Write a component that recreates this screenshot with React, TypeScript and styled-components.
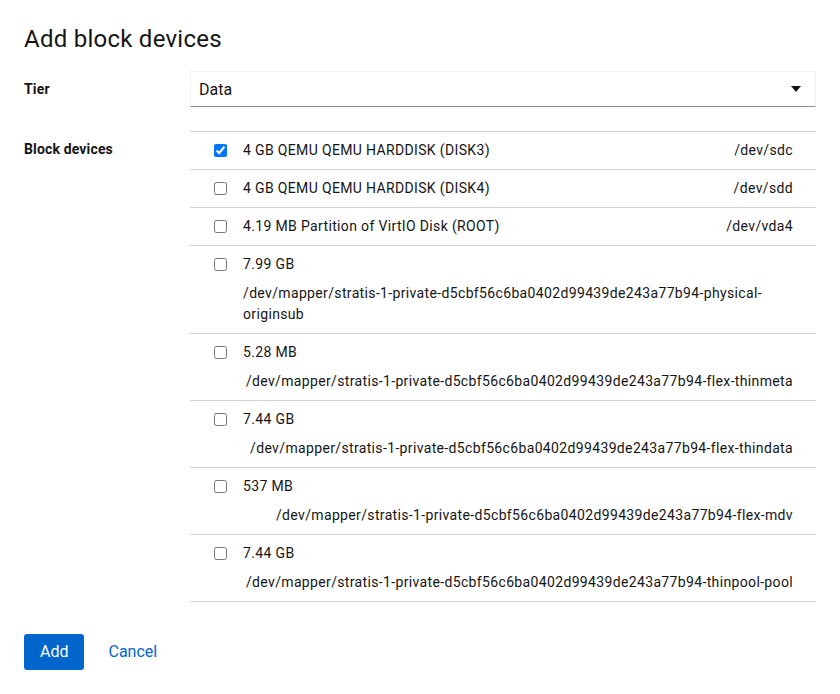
import styled, { createGlobalStyle } from "styled-components";

const GlobalStyle = createGlobalStyle`
  html, body {
    margin: 0;
    padding: 0;
    background: #ffffff;
  }
  body {
    font-family: Roboto, "Liberation Sans", sans-serif;
    color: #151515;
    font-size: 14px;
  }
`;

type Device = {
  name: string;
  path: string;
  checked?: boolean;
};

const devices: Device[] = [
  { name: "4 GB QEMU QEMU HARDDISK (DISK3)", path: "/dev/sdc", checked: true },
  { name: "4 GB QEMU QEMU HARDDISK (DISK4)", path: "/dev/sdd" },
  { name: "4.19 MB Partition of VirtIO Disk (ROOT)", path: "/dev/vda4" },
  { name: "7.99 GB", path: "/dev/mapper/stratis-1-private-d5cbf56c6ba0402d99439de243a77b94-physical-originsub" },
  { name: "5.28 MB", path: "/dev/mapper/stratis-1-private-d5cbf56c6ba0402d99439de243a77b94-flex-thinmeta" },
  { name: "7.44 GB", path: "/dev/mapper/stratis-1-private-d5cbf56c6ba0402d99439de243a77b94-flex-thindata" },
  { name: "537 MB", path: "/dev/mapper/stratis-1-private-d5cbf56c6ba0402d99439de243a77b94-flex-mdv" },
  { name: "7.44 GB", path: "/dev/mapper/stratis-1-private-d5cbf56c6ba0402d99439de243a77b94-thinpool-pool" },
];

export default function App() {
  return (
    <Page>
      <GlobalStyle />
      <Title>Add block devices</Title>
      <Form>
        <Label>Tier</Label>
        <Select>
          <span>Data</span>
          <svg width="10" height="6" viewBox="0 0 10 6">
            <path d="M0 0 H10 L5 6 Z" fill="#151515" />
          </svg>
        </Select>

        <Label>Block devices</Label>
        <List>
          {devices.map((d, i) => (
            <Row key={i}>
              <CheckCell>
                <input type="checkbox" defaultChecked={d.checked} />
              </CheckCell>
              <Cells>
                <Name>{d.name}</Name>
                <DevPath>{d.path}</DevPath>
              </Cells>
            </Row>
          ))}
        </List>
      </Form>
      <Footer>
        <PrimaryButton>Add</PrimaryButton>
        <LinkButton>Cancel</LinkButton>
      </Footer>
    </Page>
  );
}

const Page = styled.div`
  width: 840px;
  height: 694px;
  box-sizing: border-box;
  padding: 24px 24px 0 24px;
`;

const Title = styled.h1`
  margin: 0 0 16px;
  font-size: 24px;
  font-weight: 400;
  line-height: 31px;
  letter-spacing: 0.25px;
  color: #151515;
`;

const Form = styled.div`
  display: grid;
  grid-template-columns: 166px 1fr;
  row-gap: 24px;
`;

const Label = styled.label`
  font-weight: 700;
  font-size: 14px;
  line-height: 21px;
  letter-spacing: 0.15px;
  padding-top: 8px;
`;

const Select = styled.div`
  height: 36px;
  box-sizing: border-box;
  border: 1px solid #f0f0f0;
  border-bottom-color: #8a8d90;
  display: flex;
  align-items: center;
  justify-content: space-between;
  padding: 0 14px 0 8px;
  font-size: 16px;
`;

const List = styled.div`
  border-top: 1px solid #d2d2d2;
`;

const Row = styled.div`
  display: flex;
  align-items: flex-start;
  padding: 8px 23px 8px 24px;
  border-bottom: 1px solid #d2d2d2;
`;

const CheckCell = styled.div`
  height: 21px;
  display: flex;
  align-items: center;
  margin-right: 16px;

  input {
    width: 13px;
    height: 13px;
    margin: 0;
  }
`;

const Cells = styled.div`
  flex: 1;
  display: flex;
  flex-wrap: wrap;
  row-gap: 8px;
  column-gap: 16px;
  line-height: 21px;
  letter-spacing: 0.35px;
`;

const Name = styled.div`
  font-size: 14px;
`;

const DevPath = styled.div`
  margin-left: auto;
  font-size: 14px;
`;

const Footer = styled.div`
  display: flex;
  gap: 8px;
  margin-top: 32px;
`;

const PrimaryButton = styled.button`
  font-family: inherit;
  font-size: 16px;
  line-height: 24px;
  padding: 6px 16px;
  border: none;
  border-radius: 3px;
  background: #0066cc;
  color: #ffffff;
`;

const LinkButton = styled.button`
  font-family: inherit;
  font-size: 16px;
  line-height: 24px;
  padding: 6px 16px;
  border: none;
  background: transparent;
  color: #0066cc;
`;
